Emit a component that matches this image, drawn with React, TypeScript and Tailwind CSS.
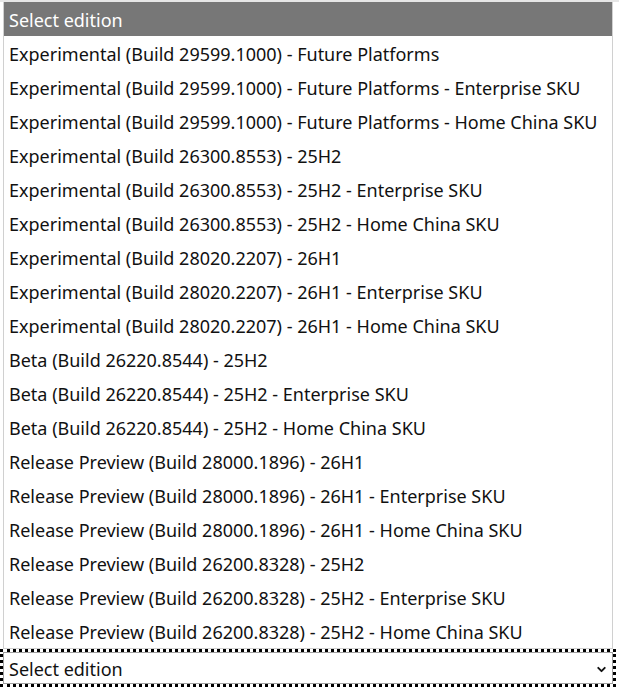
import { ChevronDown } from 'lucide-react'

const editions = [
  'Experimental (Build 29599.1000) - Future Platforms',
  'Experimental (Build 29599.1000) - Future Platforms - Enterprise SKU',
  'Experimental (Build 29599.1000) - Future Platforms - Home China SKU',
  'Experimental (Build 26300.8553) - 25H2',
  'Experimental (Build 26300.8553) - 25H2 - Enterprise SKU',
  'Experimental (Build 26300.8553) - 25H2 - Home China SKU',
  'Experimental (Build 28020.2207) - 26H1',
  'Experimental (Build 28020.2207) - 26H1 - Enterprise SKU',
  'Experimental (Build 28020.2207) - 26H1 - Home China SKU',
  'Beta (Build 26220.8544) - 25H2',
  'Beta (Build 26220.8544) - 25H2 - Enterprise SKU',
  'Beta (Build 26220.8544) - 25H2 - Home China SKU',
  'Release Preview (Build 28000.1896) - 26H1',
  'Release Preview (Build 28000.1896) - 26H1 - Enterprise SKU',
  'Release Preview (Build 28000.1896) - 26H1 - Home China SKU',
  'Release Preview (Build 26200.8328) - 25H2',
  'Release Preview (Build 26200.8328) - 25H2 - Enterprise SKU',
  'Release Preview (Build 26200.8328) - 25H2 - Home China SKU',
]

export default function App() {
  return (
    <div className="h-[687px] w-[619px] overflow-hidden bg-white font-['Noto_Sans',sans-serif] text-[18px] text-[#111]">
      <div className="h-[2px] bg-[#e6e6e6]" />

      {/* open listbox */}
      <div className="ml-[3px] w-[610px] border-x border-b border-[#d0d0d0]">
        <div className="flex h-[34px] items-center bg-[#777777] px-[5px] pt-[2px] text-white">Select edition</div>
        {editions.map((name) => (
          <div key={name} className="flex h-[34px] items-center whitespace-nowrap px-[5px] pt-[2px]">
            {name}
          </div>
        ))}
      </div>

      {/* focused select box */}
      <div className="mr-[3px] h-[38px] border-[3px] border-dotted border-black">
        <div className="flex h-full items-center justify-between border border-[#a0a0a0] pl-[5px] pr-[4px] pt-[2px]">
          <span>Select edition</span>
          <ChevronDown size={13} strokeWidth={3.5} />
        </div>
      </div>
    </div>
  )
}
